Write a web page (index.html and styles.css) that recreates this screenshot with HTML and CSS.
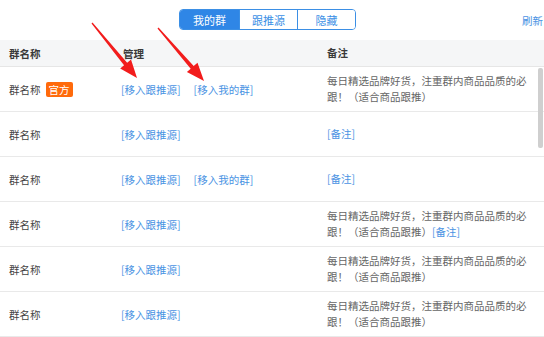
FILE: index.html
```html
<!DOCTYPE html>
<html lang="zh-CN">
<head>
<meta charset="utf-8">
<link rel="stylesheet" href="styles.css">
</head>
<body>
<div class="page">
  <div class="topbar">
    <div class="tabs">
      <span class="tab active">我的群</span>
      <span class="tab">跟推源</span>
      <span class="tab">隐藏</span>
    </div>
    <span class="refresh">刷新</span>
  </div>
  <div class="table">
    <div class="row head">
      <div class="c1">群名称</div>
      <div class="c2">管理</div>
      <div class="c3">备注</div>
    </div>
    <div class="row">
      <div class="c1">群名称<span class="badge">官方</span></div>
      <div class="c2"><span class="link">[移入跟推源]</span><span class="link">[移入我的群]</span></div>
      <div class="c3 note">每日精选品牌好货，注重群内商品品质的必跟！（适合商品跟推）</div>
    </div>
    <div class="row">
      <div class="c1">群名称</div>
      <div class="c2"><span class="link">[移入跟推源]</span></div>
      <div class="c3"><span class="link">[备注]</span></div>
    </div>
    <div class="row">
      <div class="c1">群名称</div>
      <div class="c2"><span class="link">[移入跟推源]</span><span class="link">[移入我的群]</span></div>
      <div class="c3"><span class="link">[备注]</span></div>
    </div>
    <div class="row">
      <div class="c1">群名称</div>
      <div class="c2"><span class="link">[移入跟推源]</span></div>
      <div class="c3 note">每日精选品牌好货，注重群内商品品质的必跟！（适合商品跟推）<span class="link">[备注]</span></div>
    </div>
    <div class="row">
      <div class="c1">群名称</div>
      <div class="c2"><span class="link">[移入跟推源]</span></div>
      <div class="c3 note">每日精选品牌好货，注重群内商品品质的必跟！（适合商品跟推）</div>
    </div>
    <div class="row">
      <div class="c1">群名称</div>
      <div class="c2"><span class="link">[移入跟推源]</span></div>
      <div class="c3 note">每日精选品牌好货，注重群内商品品质的必跟！（适合商品跟推）</div>
    </div>
  </div>
  <div class="scrollthumb"></div>
  <svg class="arrows" width="544" height="337" viewBox="0 0 544 337">
    <polygon fill="#f21c1c" points="91.5,23.4 124.05,65.3 120.2,68.5 137,78 131,59.6 127.15,62.8 92.5,22.6"/>
    <polygon fill="#f21c1c" points="157.5,28.5 190.7,68.7 186.9,72 204,81 197.5,62.8 193.7,66.1 158.5,27.5"/>
  </svg>
</div>
</body>
</html>
```

FILE: styles.css
```css
* { box-sizing: border-box; }
html, body { margin: 0; padding: 0; background: #fff; }
body {
  font-family: "Noto Sans CJK SC", "Noto Sans", sans-serif;
  font-size: 10.5px;
  color: #444;
}
.page {
  position: relative;
  width: 544px;
  height: 337px;
  overflow: hidden;
}
.topbar {
  height: 40px;
  display: flex;
  align-items: center;
  padding-left: 179px;
}
.tabs {
  display: flex;
  height: 21px;
  margin-top: -1px;
  border: 1px solid #3b8fe5;
  border-radius: 4px;
  overflow: hidden;
}
.tab {
  display: flex;
  align-items: center;
  justify-content: center;
  width: 58px;
  font-size: 11px;
  color: #3b8fe5;
  background: #fff;
  border-left: 1px solid #3b8fe5;
}
.tab:first-child { border-left: none; width: 59px; }
.tab.active { background: #2f86e6; color: #fff; }
.refresh {
  margin-left: auto;
  margin-right: 1px;
  color: #4a93e3;
  font-size: 10.5px;
}
.table { width: 544px; }
.row {
  display: flex;
  align-items: center;
  height: 45px;
  border-bottom: 1px solid #e9e9e9;
}
.row.head {
  height: 27px;
  background: #f5f6f7;
  border-bottom: 1px solid #e6e6e6;
  font-weight: bold;
  color: #3a3a3a;
}
.c1 {
  width: 121px;
  padding-left: 9px;
  display: flex;
  align-items: center;
}
.c2 {
  width: 206px;
  display: flex;
  gap: 13px;
}
.row.head .c2 { padding-left: 2px; }
.c3 {
  width: 204px;
  line-height: 16px;
}
.note { color: #666; }
.link { color: #4a93e3; }
.badge {
  margin-left: 5px;
  padding: 0 3px;
  height: 15px;
  line-height: 15px;
  background: #ff6a0b;
  color: #fff;
  border-radius: 2px;
}
.scrollthumb {
  position: absolute;
  left: 538px;
  top: 68px;
  width: 5px;
  height: 80px;
  background: #cfcfcf;
  border-radius: 2px;
}
.arrows {
  position: absolute;
  left: 0;
  top: 0;
  pointer-events: none;
}
```
